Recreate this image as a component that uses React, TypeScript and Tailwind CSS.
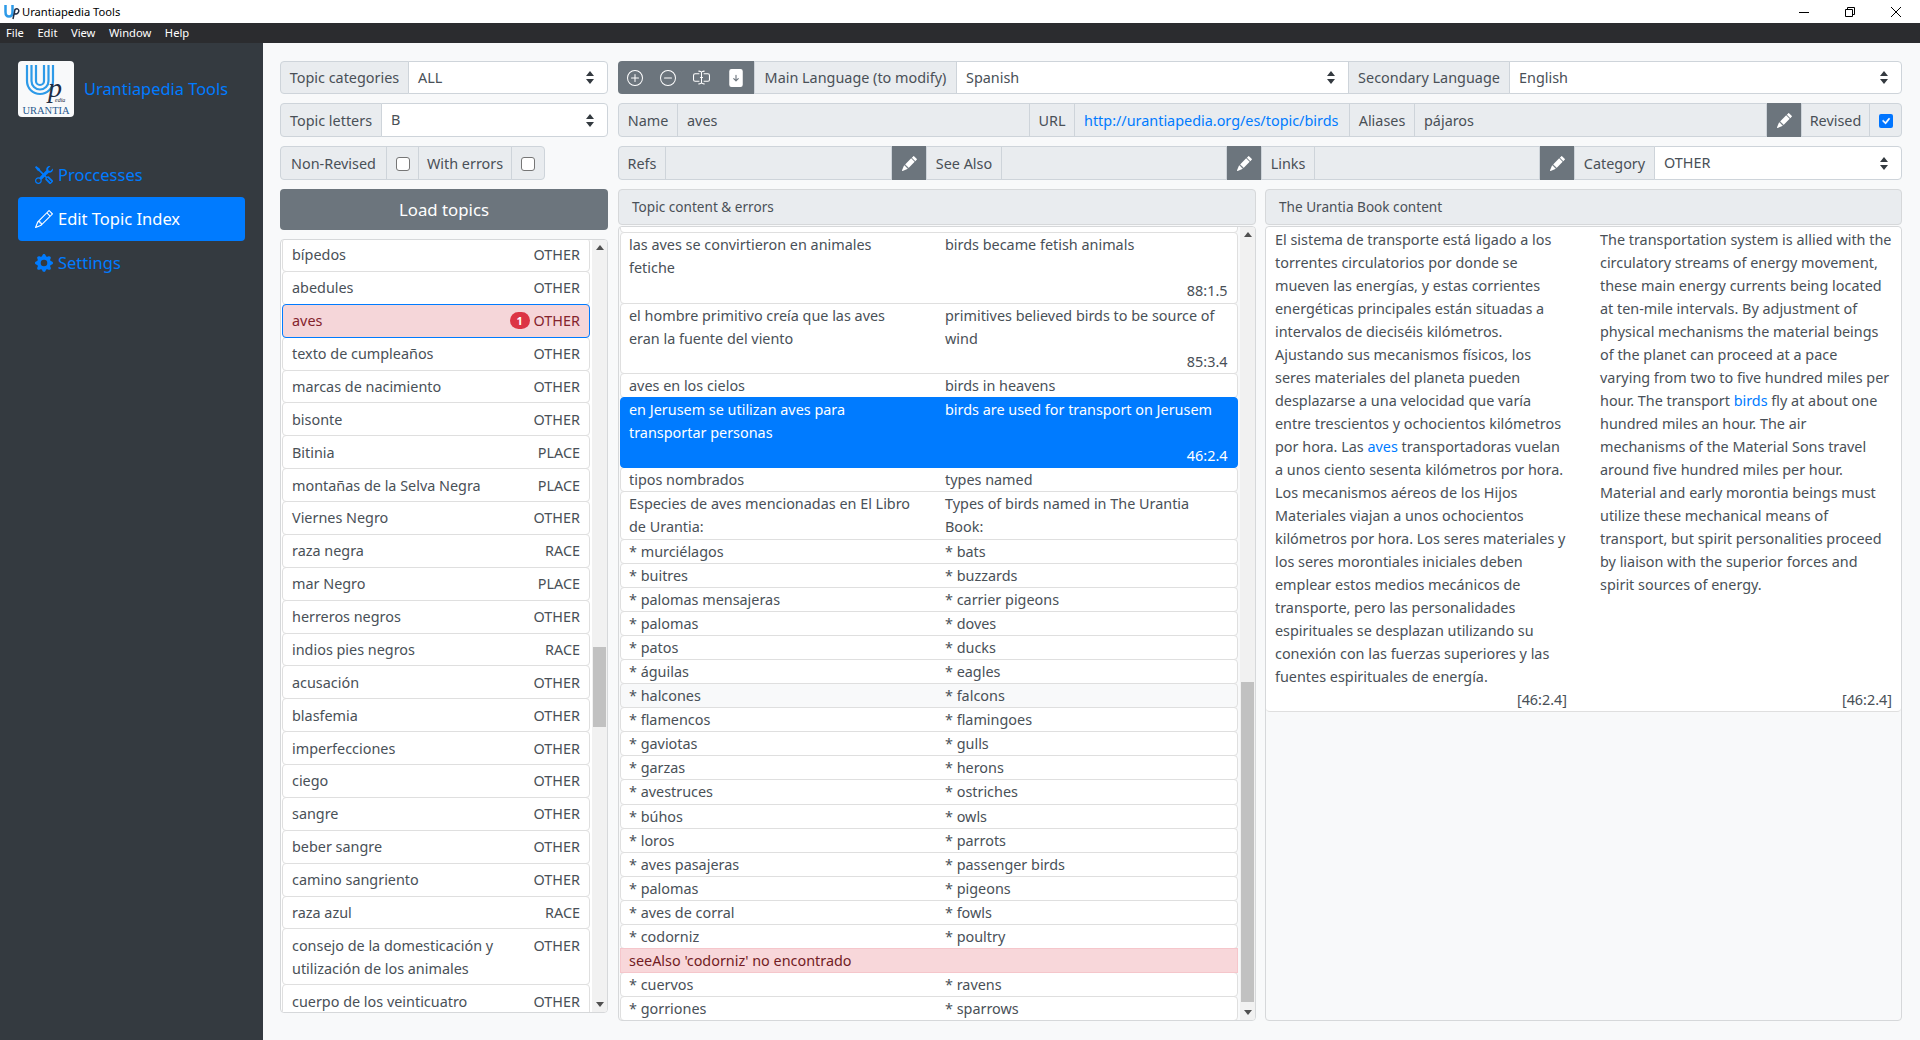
import { BsTools, BsPencil, BsGearFill, BsPlusCircle, BsDashCircle, BsInputCursorText, BsFileArrowDownFill, BsPencilFill, BsCheck } from "react-icons/bs";

const TOPICS: { name: string; cat: string; badge?: boolean }[] = [
  { name: "bípedos", cat: "OTHER" },
  { name: "abedules", cat: "OTHER" },
  { name: "aves", cat: "OTHER", badge: true },
  { name: "texto de cumpleaños", cat: "OTHER" },
  { name: "marcas de nacimiento", cat: "OTHER" },
  { name: "bisonte", cat: "OTHER" },
  { name: "Bitinia", cat: "PLACE" },
  { name: "montañas de la Selva Negra", cat: "PLACE" },
  { name: "Viernes Negro", cat: "OTHER" },
  { name: "raza negra", cat: "RACE" },
  { name: "mar Negro", cat: "PLACE" },
  { name: "herreros negros", cat: "OTHER" },
  { name: "indios pies negros", cat: "RACE" },
  { name: "acusación", cat: "OTHER" },
  { name: "blasfemia", cat: "OTHER" },
  { name: "imperfecciones", cat: "OTHER" },
  { name: "ciego", cat: "OTHER" },
  { name: "sangre", cat: "OTHER" },
  { name: "beber sangre", cat: "OTHER" },
  { name: "camino sangriento", cat: "OTHER" },
  { name: "raza azul", cat: "RACE" },
  { name: "consejo de la domesticación y utilización de los animales", cat: "OTHER" },
  { name: "cuerpo de los veinticuatro", cat: "OTHER" },
];

const SHORT_ROWS = [
  ["* murciélagos", "* bats"],
  ["* buitres", "* buzzards"],
  ["* palomas mensajeras", "* carrier pigeons"],
  ["* palomas", "* doves"],
  ["* patos", "* ducks"],
  ["* águilas", "* eagles"],
  ["* halcones", "* falcons"],
  ["* flamencos", "* flamingoes"],
  ["* gaviotas", "* gulls"],
  ["* garzas", "* herons"],
  ["* avestruces", "* ostriches"],
  ["* búhos", "* owls"],
  ["* loros", "* parrots"],
  ["* aves pasajeras", "* passenger birds"],
  ["* palomas", "* pigeons"],
  ["* aves de corral", "* fowls"],
  ["* codorniz", "* poultry"],
];

const ES_LINES = [
  "El sistema de transporte está ligado a los",
  "torrentes circulatorios por donde se",
  "mueven las energías, y estas corrientes",
  "energéticas principales están situadas a",
  "intervalos de dieciséis kilómetros.",
  "Ajustando sus mecanismos físicos, los",
  "seres materiales del planeta pueden",
  "desplazarse a una velocidad que varía",
  "entre trescientos y ochocientos kilómetros",
  "por hora. Las @aves@ transportadoras vuelan",
  "a unos ciento sesenta kilómetros por hora.",
  "Los mecanismos aéreos de los Hijos",
  "Materiales viajan a unos ochocientos",
  "kilómetros por hora. Los seres materiales y",
  "los seres morontiales iniciales deben",
  "emplear estos medios mecánicos de",
  "transporte, pero las personalidades",
  "espirituales se desplazan utilizando su",
  "conexión con las fuerzas superiores y las",
  "fuentes espirituales de energía.",
];

const EN_LINES = [
  "The transportation system is allied with the",
  "circulatory streams of energy movement,",
  "these main energy currents being located",
  "at ten-mile intervals. By adjustment of",
  "physical mechanisms the material beings",
  "of the planet can proceed at a pace",
  "varying from two to five hundred miles per",
  "hour. The transport @birds@ fly at about one",
  "hundred miles an hour. The air",
  "mechanisms of the Material Sons travel",
  "around five hundred miles per hour.",
  "Material and early morontia beings must",
  "utilize these mechanical means of",
  "transport, but spirit personalities proceed",
  "by liaison with the superior forces and",
  "spirit sources of energy.",
];

function SelectArrows() {
  return (
    <svg width="8" height="13" viewBox="0 0 8 13" className="shrink-0 fill-[#343a40]">
      <path d="M4 0 8 5H0zM4 13 0 8h8z" />
    </svg>
  );
}

function Label({ children, className = "" }: { children: React.ReactNode; className?: string }) {
  return (
    <div className={`flex items-center justify-center whitespace-nowrap border border-[#ced4da] bg-[#e9ecef] pt-px -ml-px first:ml-0 first:rounded-l-[4px] last:rounded-r-[4px] ${className}`}>
      {children}
    </div>
  );
}

function Select({ value, className = "" }: { value: string; className?: string }) {
  return (
    <div className={`flex items-center justify-between border border-[#ced4da] bg-white -ml-px pl-[9px] pr-[13px] last:rounded-r-[4px] ${className}`}>
      <span>{value}</span>
      <SelectArrows />
    </div>
  );
}

function ReadOnly({ children, className = "" }: { children?: React.ReactNode; className?: string }) {
  return (
    <div className={`flex items-center border border-[#ced4da] bg-[#e9ecef] pt-px -ml-px pl-[9px] whitespace-nowrap ${className}`}>
      {children}
    </div>
  );
}

function PencilButton() {
  return (
    <div className="flex w-[35px] shrink-0 items-center justify-center bg-[#6c757d] text-white">
      <BsPencilFill size={15} />
    </div>
  );
}

function Checkbox({ checked = false }: { checked?: boolean }) {
  return checked ? (
    <span className="flex h-[14px] w-[14px] items-center justify-center rounded-[2px] bg-[#0075ff] text-white">
      <BsCheck size={16} className="stroke-white stroke-[0.6]" />
    </span>
  ) : (
    <span className="h-[14px] w-[14px] rounded-[3px] border border-[#767676] bg-white" />
  );
}

function ScrollTrack({ thumbTop, thumbHeight }: { thumbTop: string; thumbHeight: string }) {
  return (
    <div className="flex w-[15px] shrink-0 flex-col items-center bg-[#f1f1f1] px-px">
      <svg width="8" height="5" viewBox="0 0 8 5" className="mt-[5px] shrink-0 fill-[#505050]">
        <path d="M4 0 8 5H0z" />
      </svg>
      <div className={`w-full bg-[#c1c1c1] ${thumbTop} ${thumbHeight}`} />
      <svg width="8" height="5" viewBox="0 0 8 5" className="mb-[5px] mt-auto shrink-0 fill-[#505050]">
        <path d="M4 5 0 0h8z" />
      </svg>
    </div>
  );
}

function ContentRow({ left, right, reference, className = "bg-white border-[#dfdfdf]" }: { left: string; right: string; reference?: string; className?: string }) {
  return (
    <div className={`-mt-px rounded-[4px] border pl-[8px] pr-[9.5px] ${className}`}>
      <div className="flex">
        <div className="w-[316px] shrink-0 whitespace-pre-line pr-[10px]">{left}</div>
        <div className="flex-1 whitespace-pre-line">{right}</div>
      </div>
      {reference && <div className="text-right">{reference}</div>}
    </div>
  );
}

function Highlighted({ line }: { line: string }) {
  const parts = line.split("@");
  return (
    <div className="whitespace-nowrap">
      {parts.map((part, i) =>
        i % 2 === 1 ? (
          <span key={i} className="text-[#007bff]">
            {part}
          </span>
        ) : (
          part
        )
      )}
    </div>
  );
}

function Logo() {
  return (
    <div className="relative h-[56px] w-[56px] shrink-0 overflow-hidden rounded-[4px] bg-[#f8f9fa]">
      <svg width="56" height="44" viewBox="0 0 56 44" fill="none" className="absolute left-0 top-0 stroke-[#2d9ae8]">
        <path d="M9 4v16a13 13 0 0 0 26 0V4" strokeWidth="2.2" />
        <path d="M13.500 4v16a8.500 8.500 0 0 0 17 0V4" strokeWidth="2.2" />
        <path d="M18 4v16a4 4 0 0 0 8 0V4" strokeWidth="2.2" />
      </svg>
      <span className="absolute left-[30px] top-[13px] font-['Liberation_Serif',serif] text-[28px] italic leading-[28px] text-[#1f2d45]">p</span>
      <span className="absolute left-[37px] top-[36px] font-['Liberation_Serif',serif] text-[6px] italic leading-[7px] text-[#1f2d45]">edia</span>
      <span className="absolute inset-x-0 top-[44px] text-center font-['Liberation_Serif',serif] text-[10.5px] leading-[11px] text-[#2a5a8f]">URANTIA</span>
    </div>
  );
}

export default function App() {
  return (
    <div className="flex h-[1040px] flex-col overflow-hidden bg-[#f8f9fa] font-['Noto_Sans',sans-serif] text-[14.4px] leading-[23.1px] text-[#495057]">
      {/* Title bar */}
      <div className="flex h-[23px] shrink-0 items-center bg-white pl-[3px] text-[11.2px] text-black">
        <svg width="17" height="16" viewBox="0 0 17 16" fill="none" className="mr-[2px]">
          <path d="M2.500 1v7c0 6 7 6 7 0V1" stroke="#2d9ae8" strokeWidth="2.500" />
          <path d="M10 15 12 5.500c2.500-1.500 4.500 0 3.500 2.500S12 10.500 11 9" stroke="#1f2d45" strokeWidth="1.500" />
        </svg>
        <span>Urantiapedia Tools</span>
        <div className="ml-auto mr-[1px] flex h-full items-center">
          <div className="flex w-[46px] justify-center">
            <svg width="10" height="10" viewBox="0 0 10 10" stroke="#000" fill="none"><path d="M0 5.500h10" /></svg>
          </div>
          <div className="flex w-[46px] justify-center">
            <svg width="10" height="10" viewBox="0 0 10 10" stroke="#000" fill="none"><path d="M.5 2.500h7v7h-7zM2.500 2.500v-2h7v7h-2" /></svg>
          </div>
          <div className="flex w-[46px] justify-center">
            <svg width="10" height="10" viewBox="0 0 10 10" stroke="#000" fill="none"><path d="M0 0l10 10M10 0 0 10" /></svg>
          </div>
        </div>
      </div>
      {/* Menu bar */}
      <div className="flex h-[20px] shrink-0 items-center gap-[13.5px] bg-[#2b2c2f] pl-[6px] text-[11.2px] text-white">
        <span>File</span>
        <span>Edit</span>
        <span>View</span>
        <span>Window</span>
        <span>Help</span>
      </div>

      <div className="flex min-h-0 flex-1">
        {/* Sidebar */}
        <aside className="flex w-[263px] shrink-0 flex-col bg-[#343a40] px-[18px] pt-[18px]">
          <div className="flex items-center gap-[10px]">
            <Logo />
            <span className="whitespace-nowrap text-[16.4px] text-[#007bff]">Urantiapedia Tools</span>
          </div>
          <nav className="mt-[36px] flex w-[227px] flex-col text-[16.5px]">
            <div className="flex h-[44px] items-center gap-[5px] px-[17px] text-[#007bff]">
              <BsTools size={18} />
              <span>Proccesses</span>
            </div>
            <div className="flex h-[44px] items-center gap-[5px] rounded-[4px] bg-[#007bff] px-[17px] text-white">
              <BsPencil size={18} />
              <span>Edit Topic Index</span>
            </div>
            <div className="flex h-[44px] items-center gap-[5px] px-[17px] text-[#007bff]">
              <BsGearFill size={18} />
              <span>Settings</span>
            </div>
          </nav>
        </aside>

        {/* Main */}
        <main className="flex min-w-0 flex-1 gap-[10px] pl-[17px] pr-[18px] pt-[18px]">
          {/* Left column */}
          <div className="flex w-[328px] shrink-0 flex-col">
            <div className="flex h-[33px]">
              <Label className="w-[129px] shrink-0">Topic categories</Label>
              <Select value="ALL" className="flex-1" />
            </div>
            <div className="mt-[9px] flex h-[34px]">
              <Label className="w-[102px] shrink-0">Topic letters</Label>
              <Select value="B" className="flex-1" />
            </div>
            <div className="mt-[9px] flex h-[34px]">
              <Label className="w-[107px]">Non-Revised</Label>
              <Label className="w-[33px]"><Checkbox /></Label>
              <Label className="w-[94px]">With errors</Label>
              <Label className="w-[34px]"><Checkbox /></Label>
            </div>
            <button type="button" className="mt-[9px] h-[41px] rounded-[4px] bg-[#6c757d] text-[16.8px] text-white">
              Load topics
            </button>
            <div className="mb-[27px] mt-[9px] flex min-h-0 flex-1 overflow-hidden rounded-[4px] border border-[#d6d8da] bg-white pl-[1px]">
              <div className="min-w-0 flex-1 overflow-hidden">
                <div className="-mt-[2px]">
                  {TOPICS.map((t) => (
                    <div
                      key={t.name}
                      className={`-mt-px flex justify-between gap-[12px] rounded-[4px] border px-[9px] py-[4.4px] ${
                        t.badge ? "relative border-[#007bff] bg-[#f5d6d9] text-[#84232c]" : "border-[#dfdfdf] bg-white"
                      }`}
                    >
                      <span>{t.name}</span>
                      <span className="flex shrink-0 items-start gap-[4px]">
                        {t.badge && (
                          <span className="mt-[3px] flex h-[17px] w-[20px] items-center justify-center rounded-full bg-[#dc3545] text-[11px] font-bold leading-none text-white">
                            1
                          </span>
                        )}
                        {t.cat}
                      </span>
                    </div>
                  ))}
                </div>
              </div>
              <div className="ml-[2px] flex">
                <ScrollTrack thumbTop="mt-[397px]" thumbHeight="h-[80px]" />
              </div>
            </div>
          </div>

          {/* Right area */}
          <div className="flex min-w-0 flex-1 flex-col">
            <div className="flex h-[33px]">
              <div className="flex w-[137px] shrink-0 items-center gap-[17px] rounded-l-[4px] bg-[#6c757d] pl-[9px] text-white">
                <BsPlusCircle size={16} />
                <BsDashCircle size={16} />
                <BsInputCursorText size={17} />
                <BsFileArrowDownFill size={18} />
              </div>
              <Label className="w-[203px] shrink-0">Main Language (to modify)</Label>
              <Select value="Spanish" className="flex-1" />
              <Label className="w-[162px] shrink-0">Secondary Language</Label>
              <Select value="English" className="w-[393px] shrink-0" />
            </div>
            <div className="mt-[9px] flex h-[34px]">
              <Label className="w-[60px] shrink-0">Name</Label>
              <ReadOnly className="w-[353px] shrink-0">aves</ReadOnly>
              <Label className="w-[46px] shrink-0">URL</Label>
              <ReadOnly className="w-[276px] shrink-0 text-[#007bff]">http://urantiapedia.org/es/topic/birds</ReadOnly>
              <Label className="w-[66px] shrink-0">Aliases</Label>
              <ReadOnly className="flex-1">pájaros</ReadOnly>
              <PencilButton />
              <Label className="w-[69px] shrink-0">Revised</Label>
              <Label className="w-[33px] shrink-0"><Checkbox checked /></Label>
            </div>
            <div className="mt-[9px] flex h-[34px]">
              <Label className="w-[48px] shrink-0">Refs</Label>
              <ReadOnly className="w-[227px] shrink-0" />
              <PencilButton />
              <Label className="w-[76px] shrink-0">See Also</Label>
              <ReadOnly className="w-[226px] shrink-0" />
              <PencilButton />
              <Label className="w-[54px] shrink-0">Links</Label>
              <ReadOnly className="w-[226px] shrink-0" />
              <PencilButton />
              <Label className="w-[81px] shrink-0">Category</Label>
              <Select value="OTHER" className="flex-1" />
            </div>

            <div className="mb-[19px] mt-[9px] flex min-h-0 flex-1 gap-[9px]">
              {/* Topic content */}
              <div className="flex w-[638px] shrink-0 flex-col">
                <div className="flex h-[36px] shrink-0 items-center rounded-[4px] border border-[#d6d8da] bg-[#e9ecef] pl-[13px] text-[13.6px]">
                  Topic content &amp; errors
                </div>
                <div className="mt-[1px] flex min-h-0 flex-1 overflow-hidden rounded-[4px] border border-[#d6d8da] pl-[1px]">
                  <div className="min-w-0 flex-1 overflow-hidden">
                    <div className="-mt-[69px]">
                      <ContentRow left={"\u00a0\n\u00a0"} right="" reference="88:1.2" className="border-[#dfdfdf] bg-white pb-[4px]" />
                      <ContentRow left={"las aves se convirtieron en animales\nfetiche"} right="birds became fetish animals" reference="88:1.5" />
                      <ContentRow left={"el hombre primitivo creía que las aves\neran la fuente del viento"} right={"primitives believed birds to be source of\nwind"} reference="85:3.4" />
                      <ContentRow left="aves en los cielos" right="birds in heavens" />
                      <ContentRow
                        left={"en Jerusem se utilizan aves para\ntransportar personas"}
                        right="birds are used for transport on Jerusem"
                        reference="46:2.4"
                        className="relative border-[#007bff] bg-[#007bff] text-white"
                      />
                      <ContentRow left="tipos nombrados" right="types named" />
                      <ContentRow left={"Especies de aves mencionadas en El Libro\nde Urantia:"} right={"Types of birds named in The Urantia\nBook:"} />
                      {SHORT_ROWS.map(([l, r], i) => (
                        <ContentRow key={l + r} left={l} right={r} className={i === 6 ? "border-[#dfdfdf] bg-[#f8f9fa]" : "border-[#dfdfdf] bg-white"} />
                      ))}
                      <div className="relative -mt-px border border-[#f5c6cb] bg-[#f8d7da] pl-[8px] pr-[9.5px] text-[#721c24]">seeAlso 'codorniz' no encontrado</div>
                      <ContentRow left="* cuervos" right="* ravens" />
                      <ContentRow left="* gorriones" right="* sparrows" />
                    </div>
                  </div>
                  <div className="ml-[2px] flex">
                    <ScrollTrack thumbTop="mt-[445px]" thumbHeight="h-[320px]" />
                  </div>
                </div>
              </div>

              {/* Book content */}
              <div className="flex min-w-0 flex-1 flex-col">
                <div className="flex h-[36px] shrink-0 items-center rounded-[4px] border border-[#d6d8da] bg-[#e9ecef] pl-[13px] text-[13.6px]">
                  The Urantia Book content
                </div>
                <div className="mt-[1px] min-h-0 flex-1 overflow-hidden rounded-[4px] border border-[#d6d8da]">
                  <div className="flex rounded-[4px] border-b border-[#dfdfdf] bg-white px-[9px] pt-[1px] leading-[23px]">
                    <div className="w-[325px] shrink-0 pr-[33px]">
                      {ES_LINES.map((line) => (
                        <Highlighted key={line} line={line} />
                      ))}
                      <div className="text-right">[46:2.4]</div>
                    </div>
                    <div className="flex flex-1 flex-col">
                      {EN_LINES.map((line) => (
                        <Highlighted key={line} line={line} />
                      ))}
                      <div className="mt-auto text-right">[46:2.4]</div>
                    </div>
                  </div>
                </div>
              </div>
            </div>
          </div>
        </main>
      </div>
    </div>
  );
}
